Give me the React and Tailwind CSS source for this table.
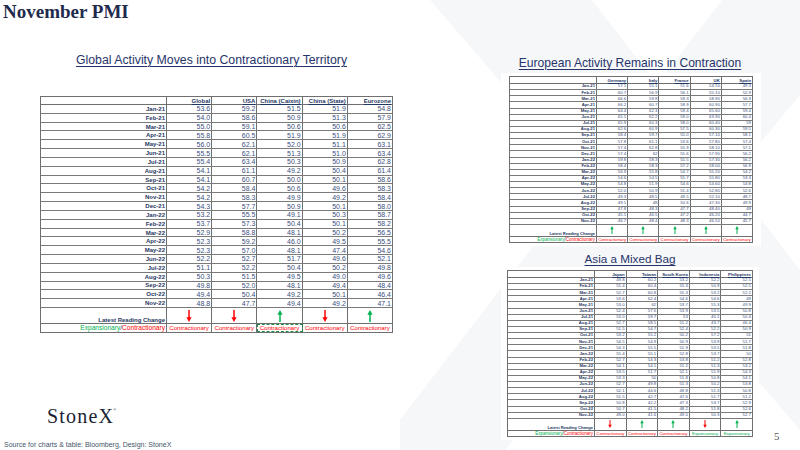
import React from 'react';

// PMI slide: one big table on the left, two small ones on the right

const GLOBAL = {
  cols: ['Global', 'USA', 'China (Caixin)', 'China (State)', 'Eurozone'],
  rows: [
    'Jan-21 53.6 59.2 51.5 51.9 54.8',
    'Feb-21 54.0 58.6 50.9 51.3 57.9',
    'Mar-21 55.0 59.1 50.6 50.6 62.5',
    'Apr-21 55.8 60.5 51.9 51.9 62.9',
    'May-21 56.0 62.1 52.0 51.1 63.1',
    'Jun-21 55.5 62.1 51.3 51.0 63.4',
    'Jul-21 55.4 63.4 50.3 50.9 62.8',
    'Aug-21 54.1 61.1 49.2 50.4 61.4',
    'Sep-21 54.1 60.7 50.0 50.1 58.6',
    'Oct-21 54.2 58.4 50.6 49.6 58.3',
    'Nov-21 54.2 58.3 49.9 49.2 58.4',
    'Dec-21 54.3 57.7 50.9 50.1 58.0',
    'Jan-22 53.2 55.5 49.1 50.3 58.7',
    'Feb-22 53.7 57.3 50.4 50.1 58.2',
    'Mar-22 52.9 58.8 48.1 50.2 56.5',
    'Apr-22 52.3 59.2 46.0 49.5 55.5',
    'May-22 52.3 57.0 48.1 47.4 54.6',
    'Jun-22 52.2 52.7 51.7 49.6 52.1',
    'Jul-22 51.1 52.2 50.4 50.2 49.8',
    'Aug-22 50.3 51.5 49.5 49.0 49.6',
    'Sep-22 49.8 52.0 48.1 49.4 48.4',
    'Oct-22 49.4 50.4 49.2 50.1 46.4',
    'Nov-22 48.8 47.7 49.4 49.2 47.1',
  ],
  arrows: ['down', 'down', 'up', 'down', 'up'],
  status: ['C', 'C', 'C', 'C', 'C'],
  marked: 2,
};

const EUROPE = {
  cols: ['Germany', 'Italy', 'France', 'UK', 'Spain'],
  rows: [
    'Jan-21 57.1 55.1 51.6 54.10 49.3',
    'Feb-21 60.7 56.9 56.1 55.10 52.9',
    'Mar-21 66.6 59.8 59.3 58.90 56.9',
    'Apr-21 66.2 60.7 58.9 60.90 57.7',
    'May-21 64.4 62.3 59.4 65.60 59.4',
    'Jun-21 65.1 62.2 59.0 63.90 60.4',
    'Jul-21 65.9 60.3 58.0 60.40 59',
    'Aug-21 62.6 60.9 57.5 60.30 59.5',
    'Sep-21 58.4 59.7 55.0 57.10 58.1',
    'Oct-21 57.8 61.1 53.6 57.80 57.4',
    'Nov-21 57.4 62.8 55.9 58.10 57.1',
    'Dec-21 57.4 62 55.6 57.90 56.2',
    'Jan-22 59.8 58.3 55.5 57.30 56.2',
    'Feb-22 58.4 58.3 57.2 58.00 56.9',
    'Mar-22 56.9 55.8 54.7 55.20 54.2',
    'Apr-22 54.6 54.5 55.7 55.80 53.3',
    'May-22 54.8 51.9 54.6 54.60 53.8',
    'Jun-22 52.0 50.9 51.4 52.80 52.6',
    'Jul-22 49.3 48.5 49.5 52.10 48.7',
    'Aug-22 49.1 48 50.6 47.30 49.9',
    'Sep-22 47.8 48.3 47.7 48.40 49',
    'Oct-22 45.1 46.5 47.2 46.20 44.7',
    'Nov-22 46.7 48.4 48.3 46.50 45.7',
  ],
  arrows: ['up', 'up', 'up', 'up', 'up'],
  status: ['C', 'C', 'C', 'C', 'C'],
};

const ASIA = {
  cols: ['Japan', 'Taiwan', 'South Korea', 'Indonesia', 'Philippines'],
  rows: [
    'Jan-21 49.8 60.2 53.2 52.2 52.5',
    'Feb-21 51.4 60.4 55.3 50.9 52.5',
    'Mar-21 52.7 60.8 55.3 53.2 52.2',
    'Apr-21 53.6 62.4 54.6 54.6 49',
    'May-21 53.0 62 53.7 55.3 49.9',
    'Jun-21 52.4 57.6 53.9 53.5 50.8',
    'Jul-21 53.0 59.7 53 40.1 50.4',
    'Aug-21 52.7 58.5 51.2 43.7 46.4',
    'Sep-21 51.5 54.7 52.4 52.2 50.9',
    'Oct-21 53.2 55.2 50.2 57.2 51',
    'Nov-21 54.5 54.9 50.9 53.9 51.7',
    'Dec-21 54.3 55.5 51.9 53.5 51.8',
    'Jan-22 55.4 55.1 52.8 53.7 50',
    'Feb-22 52.7 54.3 53.8 51.2 52.8',
    'Mar-22 54.1 54.1 51.2 51.3 53.2',
    'Apr-22 53.5 51.7 52.1 51.9 54.3',
    'May-22 53.3 50 51.8 50.8 54.1',
    'Jun-22 52.7 49.8 51.3 50.2 53.8',
    'Jul-22 52.1 44.6 49.8 51.3 50.8',
    'Aug-22 51.5 42.7 47.6 51.7 51.2',
    'Sep-22 50.8 42.2 47.3 53.7 52.9',
    'Oct-22 50.7 41.5 48.2 51.8 52.6',
    'Nov-22 49.0 41.6 49.0 50.3 52.7',
  ],
  arrows: ['down', 'up', 'up', 'down', 'up'],
  status: ['C', 'C', 'C', 'E', 'E'],
};

const BIG = {
  label: 'w-[126px]',
  head: 'h-[8px]',
  row: 'h-[8.83px]',
  latest: 'h-[16px]',
  status: 'h-[9px]',
  headText: 'text-[6px]',
  labelText: 'text-[6px]',
  valText: 'text-[7px]',
  latestText: 'text-[6px]',
  statusLabel: 'text-[6.6px]',
  statusText: 'text-[6.1px]',
  pad: 'pr-[1px]',
  arrowPad: 'pt-[2px]',
  arrow: 12,
};

const SMALL = {
  label: 'w-[87px]',
  head: 'h-[7px]',
  row: 'h-[6.13px]',
  latest: 'h-[12.5px]',
  status: 'h-[6px]',
  headText: 'text-[4.3px]',
  labelText: 'text-[4.2px]',
  valText: 'text-[4.3px]',
  latestText: 'text-[4.1px]',
  statusLabel: 'text-[4.5px]',
  statusText: 'text-[4.3px]',
  pad: 'pr-[1px]',
  arrowPad: 'pt-[1.5px]',
  arrow: 8,
};

function Arrow({ up, size }) {
  const c = up ? '#00b050' : '#ff0000';
  return (
    <svg width={size * 0.5} height={size} viewBox="0 0 6 12">
      <path d={up ? 'M3 12V4' : 'M3 0v8'} stroke={c} strokeWidth="1.5" />
      <path d={up ? 'M0.4 4.8 3 0 5.6 4.8Z' : 'M0.4 7.2 3 12 5.6 7.2Z'} fill={c} />
    </svg>
  );
}

function PmiTable({ spec, s }) {
  return (
    <div className="border-l border-t border-[#6f6f6f] bg-white font-['Liberation_Sans',Arial,sans-serif] leading-none">
      {/* header */}
      <div className={`flex ${s.head} border-b border-[#6f6f6f]`}>
        <div className={`${s.label} shrink-0 border-r border-[#6f6f6f]`} />
        {spec.cols.map((c) => (
          <div key={c} className={`flex min-w-0 flex-1 items-end justify-end whitespace-nowrap border-r border-[#6f6f6f] ${s.pad} ${s.headText} font-bold text-[#1f3864] underline`}>
            {c}
          </div>
        ))}
      </div>

      {/* months */}
      {spec.rows.map((r) => {
        const [label, ...vals] = r.split(' ');
        return (
          <div key={label} className={`flex ${s.row} border-b border-[#7a7a7a]`}>
            <div className={`${s.label} flex shrink-0 items-center justify-end border-r border-[#6f6f6f] ${s.pad} ${s.labelText} font-bold text-[#1f3864]`}>
              {label}
            </div>
            {vals.map((v, i) => (
              <div key={i} className={`flex min-w-0 flex-1 items-center justify-end border-r border-[#6f6f6f] ${s.pad} ${s.valText} text-[#3d4f80]`}>
                {v}
              </div>
            ))}
          </div>
        );
      })}

      {/* latest reading */}
      <div className={`flex ${s.latest} border-b border-[#6f6f6f]`}>
        <div className={`${s.label} flex shrink-0 items-end justify-end border-r border-[#6f6f6f] pb-[0.5px] ${s.pad} ${s.latestText} font-bold text-[#1f3864]`}>
          Latest Reading Change
        </div>
        {spec.arrows.map((a, i) => (
          <div key={i} className={`flex min-w-0 flex-1 items-start justify-center border-r border-[#6f6f6f] ${s.arrowPad}`}>
            <Arrow up={a === 'up'} size={s.arrow} />
          </div>
        ))}
      </div>

      {/* regime */}
      <div className={`flex ${s.status} border-b border-[#6f6f6f]`}>
        <div className={`${s.label} flex shrink-0 items-center justify-end whitespace-nowrap border-r border-[#6f6f6f] ${s.pad} ${s.statusLabel}`}>
          <span className="text-[#00b050]">Expansionary</span>
          <span className="text-[#1f3864]">/</span>
          <span className="text-[#ff0000]">Contractionary</span>
        </div>
        {spec.status.map((st, i) => (
          <div
            key={i}
            className={`flex min-w-0 flex-1 items-center justify-center whitespace-nowrap border-r border-[#6f6f6f] ${s.statusText} ${st === 'E' ? 'text-[#00b050]' : 'text-[#ff0000]'} ${spec.marked === i ? 'outline-1 -outline-offset-1 outline-dashed outline-[#1e8a45]' : ''}`}
          >
            {st === 'E' ? 'Expansionary' : 'Contractionary'}
          </div>
        ))}
      </div>
    </div>
  );
}

function Heading({ children, className = '' }) {
  return (
    <h2 className={`text-center font-['Liberation_Sans',Arial,sans-serif] text-[#273469] underline decoration-1 underline-offset-2 ${className}`}>
      {children}
    </h2>
  );
}

export default function App() {
  return (
    <div className="relative h-[450px] w-[800px] overflow-hidden bg-white">
      {/* faint X watermark */}
      <svg className="absolute inset-0" width="800" height="450" viewBox="0 0 800 450">
        <polygon points="430,0 592,0 800,270 800,430" fill="#f6f7f9" />
        <polygon points="722,0 800,0 800,95 505,450 400,450 400,420" fill="#f6f7f9" />
      </svg>

      <div className="relative flex h-full flex-col">
        <h1 className="pl-[3px] pt-[1px] font-['Liberation_Serif','Times_New_Roman',serif] text-[19px] font-bold leading-[21px] text-[#1f2b4d]">
          November PMI
        </h1>

        <div className="flex flex-1">
          {/* global */}
          <section className="ml-[40px] flex w-[353px] flex-col">
            <Heading className="mt-[31px] pr-[10px] text-[12.3px] leading-[14px]">
              Global Activity Moves into Contractionary Territory
            </Heading>
            <div className="mt-[29px]">
              <PmiTable spec={GLOBAL} s={BIG} />
            </div>
            <div className="mb-[14px] ml-[7px] mt-auto flex items-start font-['Liberation_Serif','Times_New_Roman',serif] text-[20px] leading-[20px] tracking-[1.2px] text-[#1b1f33]">
              StoneX
              <span className="ml-[-1px] mt-[2px] text-[4px] leading-none">®</span>
            </div>
          </section>

          {/* europe + asia */}
          <section className="ml-[114px] flex w-[246px] flex-col">
            <Heading className="mt-[34px] text-[12.1px] leading-[14px]">
              European Activity Remains in Contraction
            </Heading>
            <div className="-ml-[6px] -mr-[8px] mt-[3px] bg-white px-[8px] py-[3px]">
              <PmiTable spec={EUROPE} s={SMALL} />
            </div>
            <Heading className="mt-[5px] text-[11.7px] leading-[16px]">Asia a Mixed Bag</Heading>
            <div className="-mx-[6px] bg-white px-[6px] py-[3px] -mt-[0.5px]">
              <PmiTable spec={ASIA} s={SMALL} />
            </div>
          </section>

          <div className="ml-[21px] h-[8px] self-end font-['Liberation_Serif','Times_New_Roman',serif] text-[11px] leading-[8px] text-[#595959]">
            5
          </div>
        </div>

        <p className="h-[10px] pl-[4px] font-['Liberation_Sans',Arial,sans-serif] text-[7px] leading-[10px] text-[#44546a]">
          Source for charts &amp; table: Bloomberg, Design: StoneX
        </p>
      </div>
    </div>
  );
}
